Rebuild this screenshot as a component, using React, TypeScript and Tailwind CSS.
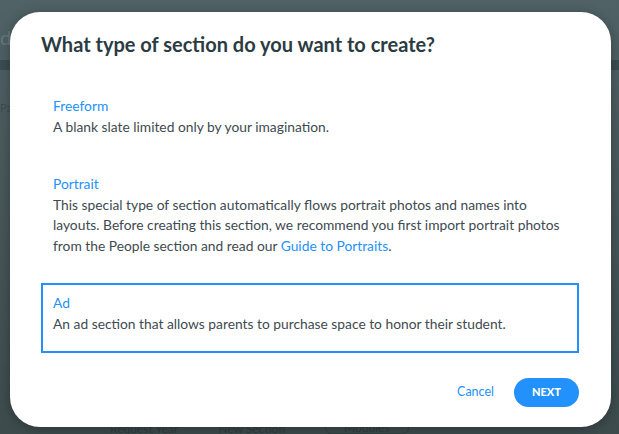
import React from 'react'

const options = [
  {
    key: 'freeform',
    title: 'Freeform',
    body: <>A blank slate limited only by your imagination.</>,
  },
  {
    key: 'portrait',
    title: 'Portrait',
    body: (
      <>
        This special type of section automatically flows portrait photos and names into
        layouts. Before creating this section, we recommend you first import portrait photos
        from the People section and read our{' '}
        <a href="#" className="text-[#2391fc]">
          Guide to Portraits
        </a>
        .
      </>
    ),
  },
  {
    key: 'ad',
    title: 'Ad',
    body: <>An ad section that allows parents to purchase space to honor their student.</>,
  },
]

export default function App() {
  const [selected, setSelected] = React.useState('ad')

  return (
    <div
      className="relative w-[619px] h-[434px] overflow-hidden bg-gradient-to-b from-[#506266] to-[#3d4b4d]"
      style={{ fontFamily: 'Lato, "Open Sans", sans-serif' }}
    >
      {/* Dimmed page behind the dialog */}
      <div className="flex flex-col h-full text-[#33474c]">
        <div className="h-[60px] pt-[22px] text-[20px] text-[#65777b]">de</div>
        <div className="h-[10px] bg-[#3c4c50]" />
        <div className="pt-[30px] text-[11px] text-[#3c4d51]">Pag</div>
        <div className="mt-auto flex items-end gap-[40px] pl-[110px] text-[12px] text-[#2f3d3f] leading-[10px]">
          <span>Request Year</span>
          <span>New Section</span>
          <span className="px-[18px] border border-[#314042] rounded-full">Modules</span>
        </div>
      </div>

      {/* Dialog */}
      <div className="absolute left-[10px] top-[12px] w-[601px] h-[415px] rounded-[30px] bg-white shadow-[0_2px_12px_rgba(0,0,0,0.3)] flex flex-col pl-[31px] pr-[32px]">
        <h2 className="pt-[19px] text-[20px] leading-[26px] font-bold text-[#2c3b42]">
          What type of section do you want to create?
        </h2>

        <div className="mt-[29px] flex flex-col gap-[8px]">
          {options.map((o) => (
            <button
              key={o.key}
              onClick={() => setSelected(o.key)}
              className={
                'text-left pl-[10px] pr-[10px] pt-[8px] pb-[17px] border-2 ' +
                (selected === o.key ? 'border-[#2391fc]' : 'border-transparent')
              }
            >
              <div className="text-[13.8px] leading-[20.5px] text-[#2391fc]">{o.title}</div>
              <div className="text-[13.8px] leading-[20.5px] text-[#3e4a50]">{o.body}</div>
            </button>
          ))}
        </div>

        <div className="mt-auto mb-[20px] flex items-center justify-end gap-[20px]">
          <button className="text-[12.5px] text-[#2391fc]">Cancel</button>
          <button className="h-[29px] w-[65px] rounded-full bg-[#2391fc] text-white text-[11px] font-black">
            NEXT
          </button>
        </div>
      </div>
    </div>
  )
}
